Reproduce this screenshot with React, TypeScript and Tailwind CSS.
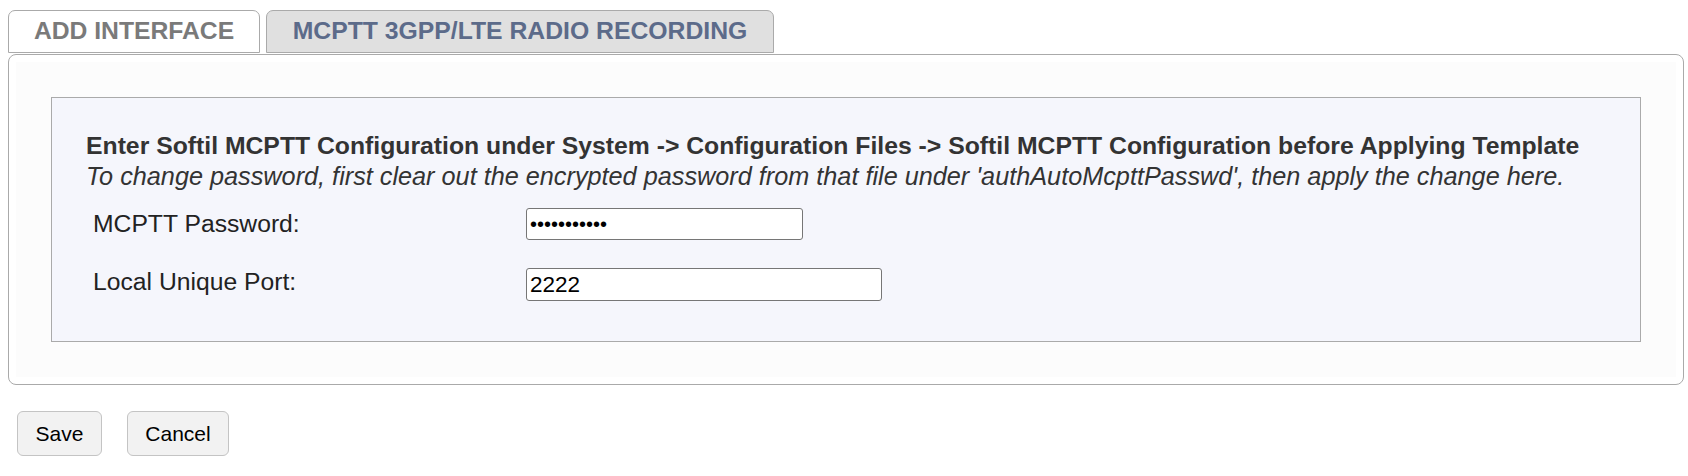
import React from "react";

export default function App() {
  const font = { fontFamily: '"Liberation Sans", Arial, sans-serif' };
  return (
    <div className="w-[1688px] h-[476px] bg-white overflow-hidden" style={font}>
      <div className="flex items-end pt-[10px] pl-[8px] gap-[6px]">
        <div className="w-[252px] h-[43px] border border-[#aaaaaa] rounded-t-[7px] bg-white flex items-center justify-center text-[24.7px] font-bold text-[#7a7a7a] leading-none">
          ADD INTERFACE
        </div>
        <div className="w-[508px] h-[43px] border border-[#aaaaaa] rounded-t-[7px] bg-[#e0e0e0] flex items-center justify-center text-[24.75px] font-bold text-[#5c6b8a] leading-none">
          MCPTT 3GPP/LTE RADIO RECORDING
        </div>
      </div>
      <div className="mt-[1px] ml-[8px] mr-[4px] border border-[#aaaaaa] rounded-[8px] bg-white p-[7px]">
        <div className="bg-[#fcfcfc] p-[35px]">
          <div className="h-[245px] border border-[#aaaaaa] bg-[#f5f6fc] pt-[33px] pl-[34px]">
            <div className="h-[30px] leading-[30px] text-[24.75px] font-bold text-[#333333] whitespace-nowrap">
              Enter Softil MCPTT Configuration under System -&gt; Configuration Files -&gt; Softil MCPTT Configuration before Applying Template
            </div>
            <div className="h-[30px] leading-[30px] text-[25.25px] italic text-[#333333] whitespace-nowrap">
              To change password, first clear out the encrypted password from that file under 'authAutoMcpttPasswd', then apply the change here.
            </div>
            <div className="mt-[17px] pl-[7px] flex flex-col gap-[28px]">
              <div className="flex items-center h-[32px]">
                <div className="w-[433px] text-[24.7px] text-[#222222] leading-none">MCPTT Password:</div>
                <input
                  type="password"
                  defaultValue="abcdefghijk"
                  className="w-[277px] h-[32px] border border-[#767676] rounded-[3px] bg-white px-[3px] text-[20px] text-black outline-none"
                  style={font}
                />
              </div>
              <div className="flex items-center h-[33px]">
                <div className="w-[433px] text-[24.7px] text-[#222222] leading-none -mt-[5px]">Local Unique Port:</div>
                <input
                  type="text"
                  defaultValue="2222"
                  className="w-[356px] h-[33px] border border-[#767676] rounded-[3px] bg-white px-[3px] text-[22.5px] text-black outline-none"
                  style={font}
                />
              </div>
            </div>
          </div>
        </div>
      </div>
      <div className="flex gap-[25px] mt-[26px] ml-[17px]">
        <button className="w-[85px] h-[45px] border border-[#c4c4c4] rounded-[6px] bg-[#f2f2f2] text-[21px] text-black" style={font}>
          Save
        </button>
        <button className="w-[102px] h-[45px] border border-[#c4c4c4] rounded-[6px] bg-[#f2f2f2] text-[21px] text-black" style={font}>
          Cancel
        </button>
      </div>
    </div>
  );
}
